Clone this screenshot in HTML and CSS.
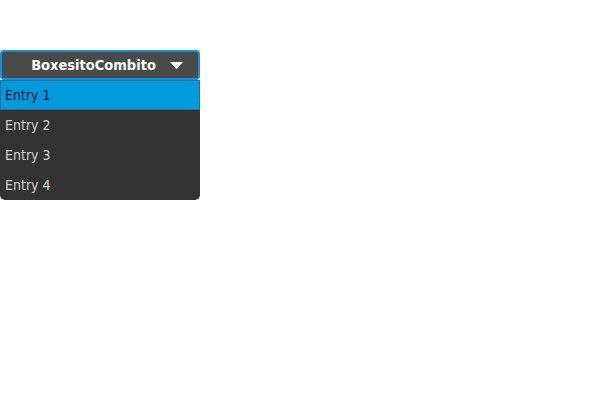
FILE: index.html
```html
<!DOCTYPE html>
<html>
<head>
<meta charset="utf-8">
<link rel="stylesheet" href="styles.css">
</head>
<body>
<div class="combo">
  <div class="button">
    <span class="label">BoxesitoCombito</span>
    <svg class="arrow" width="13" height="7" viewBox="0 0 13 7"><path d="M0 0 H13 L6.5 7 Z" fill="#fff"/></svg>
  </div>
  <ul class="list">
    <li class="item active">Entry 1</li>
    <li class="item">Entry 2</li>
    <li class="item">Entry 3</li>
    <li class="item">Entry 4</li>
  </ul>
</div>
</body>
</html>
```
FILE: styles.css
```css
html, body {
  margin: 0;
  padding: 0;
  background: #fff;
}
body {
  font-family: "DejaVu Sans Condensed", "DejaVu Sans", sans-serif;
}
.combo {
  width: 200px;
  margin-top: 50px;
}
.button {
  box-sizing: border-box;
  height: 30px;
  border: 2px solid #1a90d8;
  border-radius: 4px;
  background: #4a4a4a;
  display: flex;
  align-items: center;
  justify-content: center;
  gap: 14px;
  padding-left: 14px;
}
.label {
  color: #fff;
  font-weight: bold;
  font-size: 14.5px;
}
.arrow {
  display: block;
}
.list {
  list-style: none;
  margin: 0;
  padding: 0;
  background: #333;
  border-radius: 0 0 5px 5px;
  overflow: hidden;
}
.item {
  box-sizing: border-box;
  height: 30px;
  line-height: 31px;
  padding-left: 5px;
  font-size: 14px;
  color: #d0d0d0;
}
.item.active {
  background: #0099dd;
  color: #222;
  border: 1px solid #2a6f96;
  line-height: 29px;
  padding-left: 4px;
}
```
